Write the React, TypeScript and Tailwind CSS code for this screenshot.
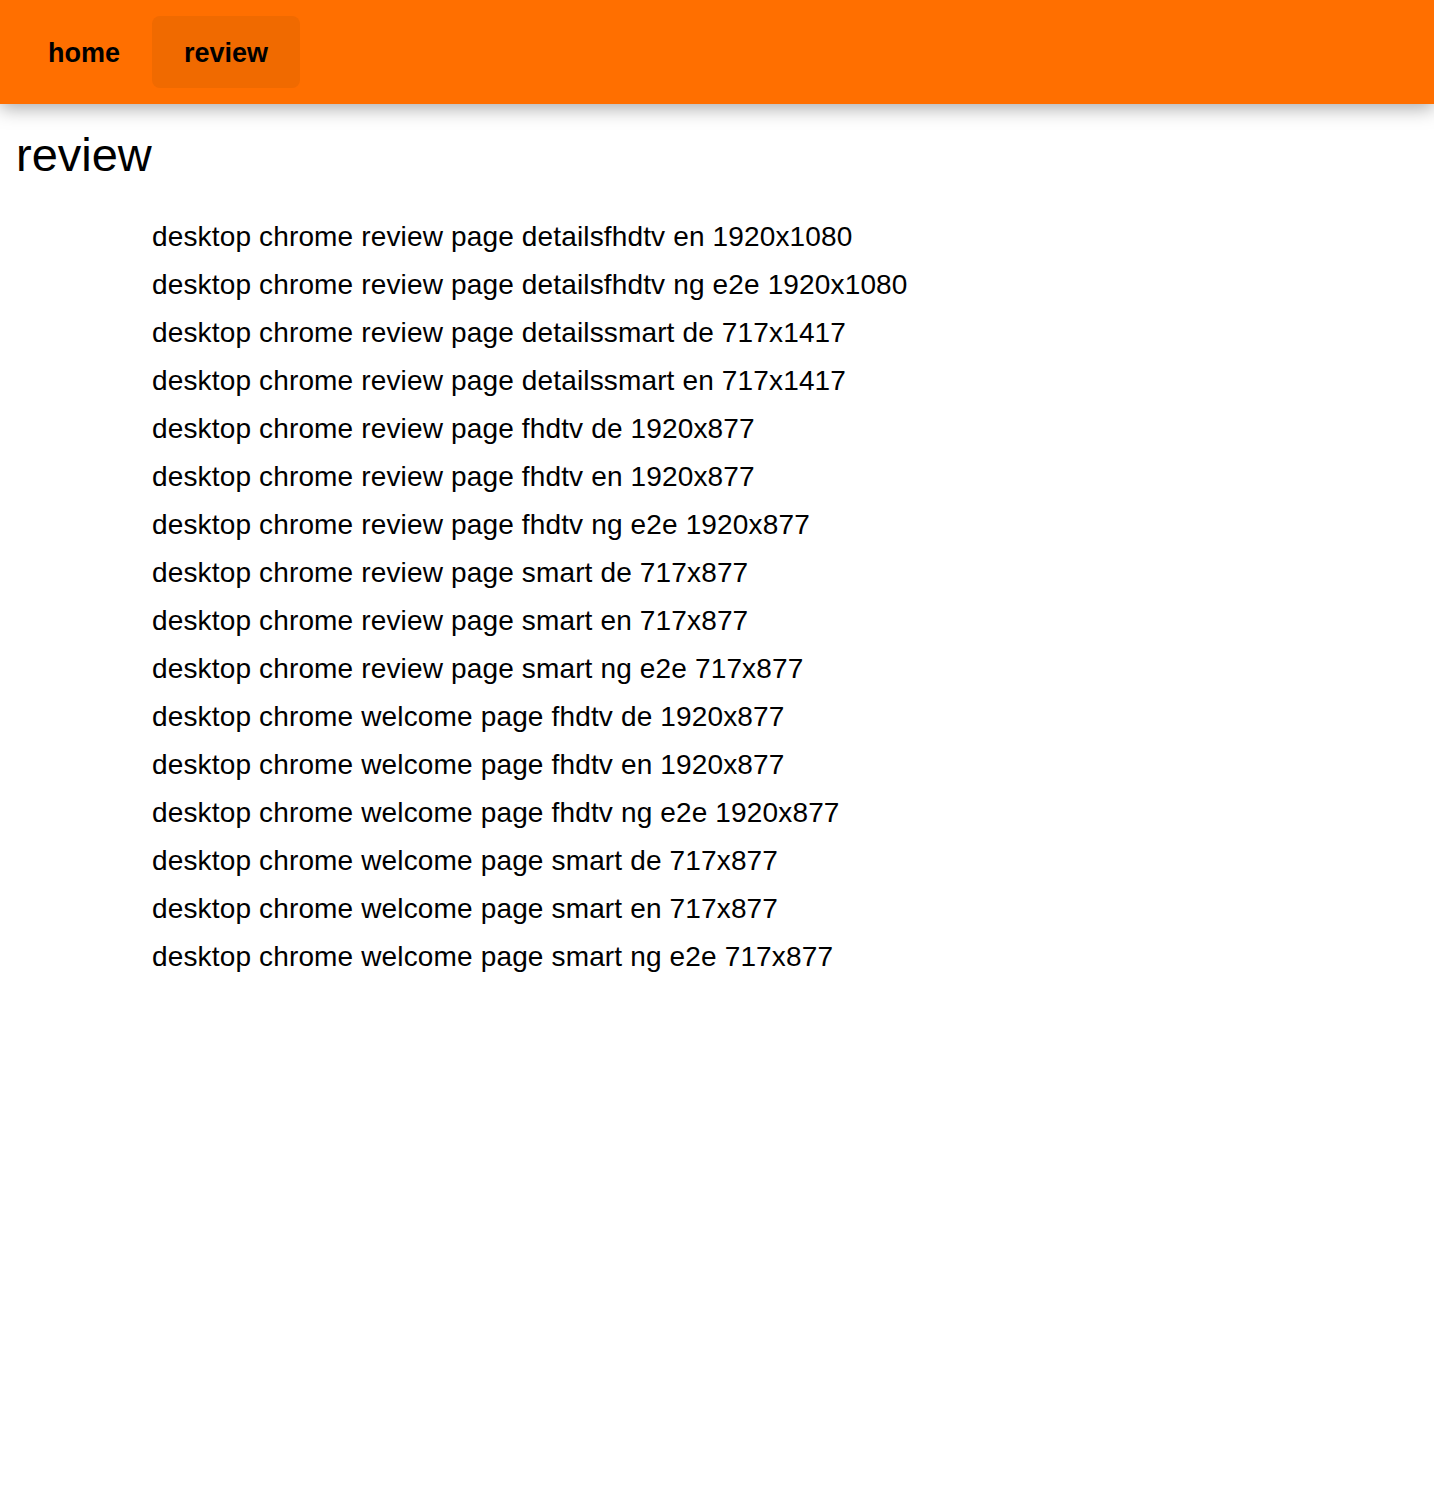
import React from "react";

const items = [
  "desktop chrome review page detailsfhdtv en 1920x1080",
  "desktop chrome review page detailsfhdtv ng e2e 1920x1080",
  "desktop chrome review page detailssmart de 717x1417",
  "desktop chrome review page detailssmart en 717x1417",
  "desktop chrome review page fhdtv de 1920x877",
  "desktop chrome review page fhdtv en 1920x877",
  "desktop chrome review page fhdtv ng e2e 1920x877",
  "desktop chrome review page smart de 717x877",
  "desktop chrome review page smart en 717x877",
  "desktop chrome review page smart ng e2e 717x877",
  "desktop chrome welcome page fhdtv de 1920x877",
  "desktop chrome welcome page fhdtv en 1920x877",
  "desktop chrome welcome page fhdtv ng e2e 1920x877",
  "desktop chrome welcome page smart de 717x877",
  "desktop chrome welcome page smart en 717x877",
  "desktop chrome welcome page smart ng e2e 717x877",
];

export default function App() {
  return (
    <div className="min-h-[1508px] bg-white text-black" style={{ fontFamily: '"Liberation Sans", Arial, sans-serif' }}>
      <header className="relative z-10 h-[104px] bg-[#ff6f00] shadow-[0_4px_18px_rgba(0,0,0,0.35)] flex items-center px-4">
        <a className="h-[72px] px-8 pt-[2px] flex items-center text-[27px] font-bold rounded-lg">home</a>
        <a className="h-[72px] w-[148px] pt-[2px] justify-center flex items-center text-[27px] font-bold rounded-lg bg-[#f06a00]">review</a>
      </header>
      <h1 className="text-[47px] leading-none pl-4 pt-[27px]">review</h1>
      <ul className="pl-[152px] pt-[35px]">
        {items.map((t) => (
          <li key={t} className="h-[48px] flex items-center text-[28px] tracking-[0.15px]">
            {t}
          </li>
        ))}
      </ul>
    </div>
  );
}
